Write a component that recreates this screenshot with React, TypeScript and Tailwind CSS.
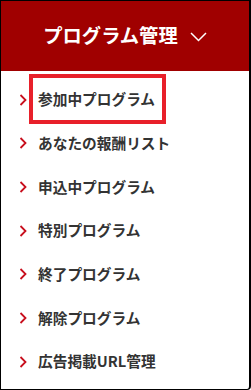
import React from "react";

const items = [
  "参加中プログラム",
  "あなたの報酬リスト",
  "申込中プログラム",
  "特別プログラム",
  "終了プログラム",
  "解除プログラム",
  "広告掲載URL管理",
];

function Chevron() {
  return (
    <svg width="8" height="12" viewBox="0 0 8 12" className="shrink-0">
      <path d="M1.5 1 L6.5 6 L1.5 11" fill="none" stroke="#c8101e" strokeWidth="1.8" />
    </svg>
  );
}

export default function App() {
  return (
    <div
      className="relative w-[251px] h-[390px] border border-black border-r-2 rounded-br-[4px] bg-white overflow-hidden"
      style={{ fontFamily: '"Noto Sans CJK JP", "Noto Sans", sans-serif' }}
    >
      <div className="h-[70px] bg-[#a00000] flex items-center justify-center gap-[12px]">
        <span className="text-white font-bold text-[19.3px] leading-none">プログラム管理</span>
        <svg width="17" height="10" viewBox="0 0 17 10" className="mt-[1px]">
          <path d="M1 1 L8.5 8.5 L16 1" fill="none" stroke="#fff" strokeWidth="1.5" />
        </svg>
      </div>
      <ul className="pt-[7px]">
        {items.map((t) => (
          <li key={t} className="h-[43.67px] flex items-center pl-[18px] gap-[11px]">
            <Chevron />
            <span className="text-[#333333] font-bold text-[14.7px] leading-none">{t}</span>
          </li>
        ))}
      </ul>
      <div className="absolute left-[28px] top-[73px] w-[137px] h-[50px] border-[4px] border-[#e8202a]" />
    </div>
  );
}
